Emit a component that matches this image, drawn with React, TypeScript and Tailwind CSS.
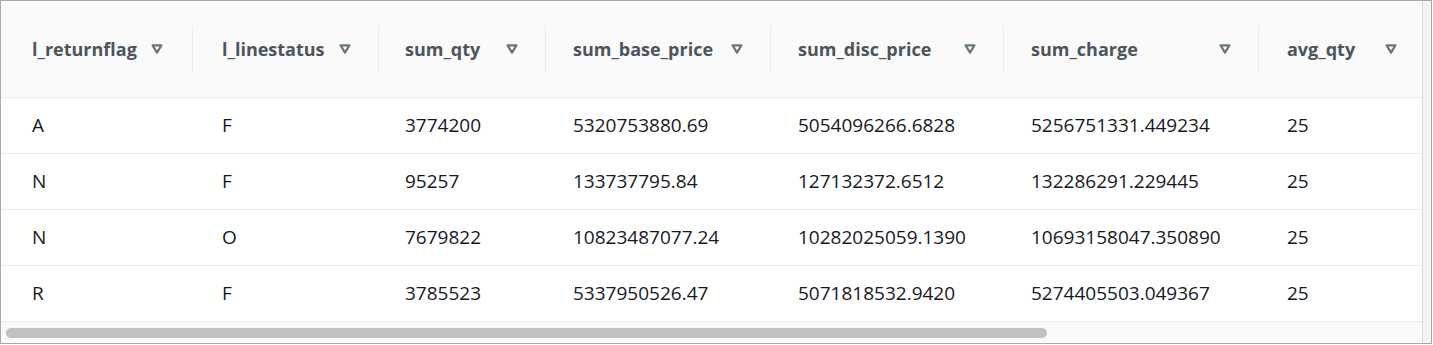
import React from "react";

type Column = {
  key: string;
  width: string;
  pad: string;
};

const columns: Column[] = [
  { key: "l_returnflag", width: "w-[191px]", pad: "pl-[31px] pr-[29px]" },
  { key: "l_linestatus", width: "w-[185px]", pad: "pl-[29px] pr-[27px]" },
  { key: "sum_qty", width: "w-[166px]", pad: "pl-[26px] pr-[27px]" },
  { key: "sum_base_price", width: "w-[224px]", pad: "pl-[27px] pr-[27px]" },
  { key: "sum_disc_price", width: "w-[232px]", pad: "pl-[27px] pr-[27px]" },
  { key: "sum_charge", width: "w-[254px]", pad: "pl-[27px] pr-[27px]" },
  { key: "avg_qty", width: "w-[162px]", pad: "pl-[28px] pr-[24px]" },
];

const rows: string[][] = [
  ["A", "F", "3774200", "5320753880.69", "5054096266.6828", "5256751331.449234", "25"],
  ["N", "F", "95257", "133737795.84", "127132372.6512", "132286291.229445", "25"],
  ["N", "O", "7679822", "10823487077.24", "10282025059.1390", "10693158047.350890", "25"],
  ["R", "F", "3785523", "5337950526.47", "5071818532.9420", "5274405503.049367", "25"],
];

function SortIcon() {
  return (
    <svg width="12" height="10" viewBox="0 0 12 10" className="shrink-0">
      <path d="M1.6 1.4 H10.4 L6 8.6 Z" fill="none" stroke="#687878" strokeWidth="2.2" strokeLinejoin="round" />
    </svg>
  );
}

export default function App() {
  return (
    <div className="h-[345px] w-[1433px] bg-white font-['Open_Sans',sans-serif]">
      <div className="flex h-[344px] w-[1432px] border border-[#a9a9a9]">
        <div className="flex min-w-0 flex-1 flex-col">
          <div className="min-w-0 flex-1 overflow-hidden">
            <div className="flex h-[97px] items-center border-b border-[#eaeded] bg-[#fafafa]">
              {columns.map((col, i) => (
                <React.Fragment key={col.key}>
                  {i > 0 && <div className="h-[46px] w-px bg-[#eaeded]" />}
                  <div className={`flex shrink-0 items-center justify-between ${col.width} ${col.pad}`}>
                    <span className="text-[18px] font-bold text-[#4d545c]">{col.key}</span>
                    <SortIcon />
                  </div>
                </React.Fragment>
              ))}
            </div>
            {rows.map((row, r) => (
              <div key={r} className="flex h-[56px] items-center border-b border-[#eaeded]">
                {row.map((cell, i) => (
                  <React.Fragment key={i}>
                    {i > 0 && <div className="w-px" />}
                    <div className={`shrink-0 text-[19px] text-[#16191f] ${columns[i].width} ${columns[i].pad}`}>
                      {cell}
                    </div>
                  </React.Fragment>
                ))}
              </div>
            ))}
          </div>
          <div className="flex h-[21px] items-start bg-[#fafafa] pl-[5px] pt-[6px]">
            <div className="h-[10px] w-[1041px] rounded-full bg-[#c1c1c1]" />
          </div>
        </div>
        <div className="w-[9px] border-l border-[#d9d9d9] bg-[#f4f4f4]" />
      </div>
    </div>
  );
}
